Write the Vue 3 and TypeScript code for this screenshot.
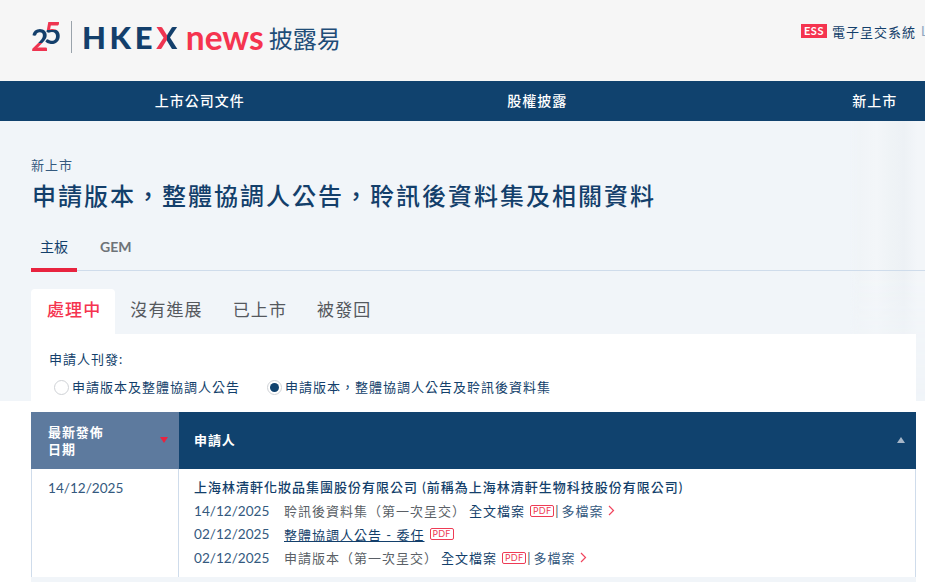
<script setup lang="ts">
interface DocLine { date: string; title: string; full: boolean; link?: boolean }
const navItems: string[] = ['上市公司文件', '股權披露', '新上市']
const tabs: string[] = ['處理中', '沒有進展', '已上市', '被發回']
const lines: DocLine[] = [
  { date: '14/12/2025', title: '聆訊後資料集（第一次呈交）', full: true },
  { date: '02/12/2025', title: '整體協調人公告 - 委任', full: false, link: true },
  { date: '02/12/2025', title: '申請版本（第一次呈交）', full: true },
]
</script>

<template>
  <div class="page">
    <header class="top">
      <div class="brand">
        <div class="mark"><span class="two">2</span><span class="five">5</span></div>
        <div class="divider"></div>
        <div class="hkex">HKE<span class="x">X</span></div>
        <div class="news">news</div>
        <div class="cn">披露易</div>
      </div>
      <div class="ess"><span class="ess-tag">ESS</span><span class="ess-text">電子呈交系統</span><span class="ess-more">L</span></div>
    </header>
    <nav class="nav">
      <a v-for="n in navItems" :key="n" class="nav-item">{{ n }}</a>
    </nav>
    <section class="hero">
      <div class="stripes"></div>
      <div class="crumb">新上市</div>
      <h1 class="title">申請版本，整體協調人公告，聆訊後資料集及相關資料</h1>
      <div class="board">
        <span class="board-item active">主板</span>
        <span class="board-item gem">GEM</span>
      </div>
      <div class="tabs">
        <span v-for="(t, i) in tabs" :key="t" class="tab" :class="{ on: i === 0 }">{{ t }}</span>
      </div>
      <div class="filter">
        <div class="filter-label">申請人刊發:</div>
        <div class="radios">
          <label class="radio"><span class="dot"></span>申請版本及整體協調人公告</label>
          <label class="radio second"><span class="dot checked"></span>申請版本，整體協調人公告及聆訊後資料集</label>
        </div>
      </div>
    </section>
    <section class="table-wrap">
      <div class="thead">
        <div class="th th-date"><span>最新發佈<br />日期</span><i class="sort-down"></i></div>
        <div class="th th-name"><span>申請人</span><i class="sort-up"></i></div>
      </div>
      <div class="row">
        <div class="cell-date">14/12/2025</div>
        <div class="cell-main">
          <div class="company">上海林清軒化妝品集團股份有限公司 (前稱為上海林清軒生物科技股份有限公司)</div>
          <div v-for="l in lines" :key="l.title" class="doc">
            <span class="doc-date">{{ l.date }}</span>
            <span class="doc-title" :class="{ link: l.link }">{{ l.title }}</span>
            <span v-if="l.full" class="doc-full">全文檔案</span>
            <span class="pdf">PDF</span>
            <template v-if="l.full">
              <span class="sep">|</span>
              <span class="multi">多檔案</span>
              <svg class="chev" width="7" height="11" viewBox="0 0 7 11"><path d="M1 1l4.5 4.5L1 10" fill="none" stroke="#f0455e" stroke-width="1.2" /></svg>
            </template>
          </div>
        </div>
      </div>
      <div class="band"></div>
    </section>
  </div>
</template>

<style>
html, body { margin: 0; overflow: hidden; background: #fff; }
</style>

<style scoped>
.page {
  width: 925px; height: 582px; overflow: hidden;
  font-family: Lato, "Noto Sans CJK TC", sans-serif; color: #133f6b;
  text-spacing-trim: space-all;
}
.top { height: 81px; background: #f6f6f6; display: flex; position: relative; }
.brand { display: flex; align-items: center; padding-left: 31px; height: 74px; white-space: nowrap; }
.mark { width: 30px; height: 34px; position: relative; font-family: Lato, sans-serif; font-weight: 700; line-height: 34px; }
.two { position: absolute; left: 0; top: 2px; font-size: 30px; background: linear-gradient(180deg, #133f6b 0 62%, #ee3450 62%); -webkit-background-clip: text; background-clip: text; color: transparent; }
.five { position: absolute; left: 13px; top: -5px; font-size: 30px; background: linear-gradient(180deg, #ee3450 0 45%, #133f6b 45%); -webkit-background-clip: text; background-clip: text; color: transparent; }
.divider { width: 1px; height: 32px; background: #9aa3ab; margin: 0 10px 0 10px; }
.hkex { font-family: Lato, sans-serif; font-weight: 900; font-size: 31px; letter-spacing: 3.6px; color: #133f6b; }
.x { background: linear-gradient(90deg, #ee3450 45%, #133f6b 45%); -webkit-background-clip: text; background-clip: text; color: transparent; }
.news { font-family: Lato, sans-serif; font-weight: 700; font-size: 33.5px; color: #f5344f; margin-left: 5px; }
.cn { font-size: 24px; color: #1f4d78; margin-left: 5px; }
.ess { position: absolute; left: 801px; top: 22px; display: flex; align-items: center; white-space: nowrap; height: 18px; }
.ess-tag { background: #f5344f; color: #fff; font-size: 11px; font-weight: 700; width: 26px; height: 14px; line-height: 14px; text-align: center; letter-spacing: .5px; }
.ess-text { font-size: 13px; margin-left: 5px; letter-spacing: 1px; color: #133f6b; }
.ess-more { font-size: 13px; margin-left: 5px; color: #8fa8c2; }
.nav { height: 40px; background: #10426e; display: flex; padding-left: 31px; }
.nav-item { flex: 0 0 337.5px; text-align: center; line-height: 40px; color: #fff; font-size: 14px; font-weight: 500; letter-spacing: 1px; }
.hero { height: 280px; background: #f1f5f9; padding: 0 9px 0 31px; box-sizing: border-box; position: relative; }
.stripes { position: absolute; right: 0; top: 0; width: 75px; height: 280px; background: linear-gradient(90deg, transparent 0, #f0f4f7 12%, #f3f6f9 35%, #eff3f6 55%, #edf1f5 72%, #f3f6f9 90%); -webkit-mask-image: linear-gradient(180deg, #000 55%, transparent); mask-image: linear-gradient(180deg, #000 55%, transparent); }
.crumb { position: relative; padding-top: 35px; font-size: 13px; line-height: 18px; color: #34597e; letter-spacing: 1px; }
.title { position: relative; margin: 4px 0 0 1px; font-size: 24px; line-height: 36px; font-weight: 500; letter-spacing: 2px; color: #133f6b; white-space: nowrap; }
.board { display: flex; margin-top: 13px; height: 44px; border-bottom: 1px solid #cfdceb; margin-right: -9px; box-sizing: border-box; position: relative; }
.board-item { font-size: 14px; line-height: 40px; }
.active { width: 46px; text-align: center; color: #133f6b; border-bottom: 4px solid #e8233f; height: 41px; }
.gem { margin-left: 23px; color: #6e7378; font-weight: 700; }
.tabs { display: flex; margin-top: 18px; position: relative; }
.tab { padding: 0 15px; height: 45px; line-height: 42px; font-size: 17px; letter-spacing: 1.1px; color: #55595e; border-radius: 4px 4px 0 0; }
.tab.on { background: #fff; color: #f5344f; font-weight: 500; padding: 0 14px 0 16px; }
.filter { position: relative; background: #fff; height: 67px; padding-left: 18px; box-sizing: border-box; }
.filter-label { font-size: 13px; line-height: 18px; padding-top: 16px; letter-spacing: 1px; color: #133f6b; }
.radios { display: flex; margin-top: 10px; padding-left: 5px; }
.radio { display: flex; align-items: center; font-size: 13px; line-height: 18px; letter-spacing: 1px; color: #133f6b; }
.second { margin-left: 27px; }
.dot { width: 13px; height: 13px; border-radius: 50%; border: 1px solid #cfd2d6; background: #fff; margin-right: 3px; box-sizing: content-box; position: relative; }
.checked::after { content: ""; position: absolute; left: 2px; top: 2px; width: 9px; height: 9px; border-radius: 50%; background: #10426e; }
.table-wrap { padding: 11px 9px 0 31px; background: #fff; }
.thead { display: flex; height: 57px; }
.th { display: flex; align-items: center; color: #fff; font-size: 13px; font-weight: 700; line-height: 17px; position: relative; letter-spacing: .9px; box-sizing: border-box; }
.th-date { width: 148px; background: #5d7a9e; padding-left: 17px; }
.th-name { flex: 1; background: #10426e; padding-left: 15px; }
.sort-down { position: absolute; right: 11px; top: 25px; width: 0; height: 0; border-left: 4px solid transparent; border-right: 4px solid transparent; border-top: 6px solid #e8233f; }
.sort-up { position: absolute; right: 11px; top: 25px; width: 0; height: 0; border-left: 4px solid transparent; border-right: 4px solid transparent; border-bottom: 6px solid #a6b6c8; }
.row { display: flex; border: 1px solid #cfdceb; border-width: 0 1px; height: 108px; box-sizing: border-box; }
.cell-date { width: 147px; border-right: 1px solid #cfdceb; padding: 10px 0 0 16px; font-size: 13.6px; line-height: 18px; box-sizing: border-box; flex: none; color: #34597e; }
.cell-main { padding: 8px 0 0 15px; white-space: nowrap; }
.company { font-size: 13px; line-height: 20px; font-weight: 500; letter-spacing: 1px; color: #133f6b; margin-bottom: 2px; }
.doc { display: flex; align-items: center; height: 23.5px; font-size: 13px; letter-spacing: 1px; }
.doc-date { font-size: 13.6px; letter-spacing: 0; width: 90px; color: #34597e; }
.doc-title { color: #5a5f66; }
.doc-title.link { color: #133f6b; text-decoration: underline; }
.doc-full { margin-left: 3px; color: #133f6b; }
.pdf { font-size: 9px; line-height: 10px; letter-spacing: .3px; color: #ee3b55; border: 1px solid #ee3b55; border-radius: 2px; padding: 0 2px; margin-left: 5px; }
.sep { color: #55595e; margin-left: 1px; }
.multi { margin-left: 2px; color: #34597e; }
.chev { margin-left: 4px; }
.band { height: 6px; background: #f1f5f9; margin: 0; }
</style>
